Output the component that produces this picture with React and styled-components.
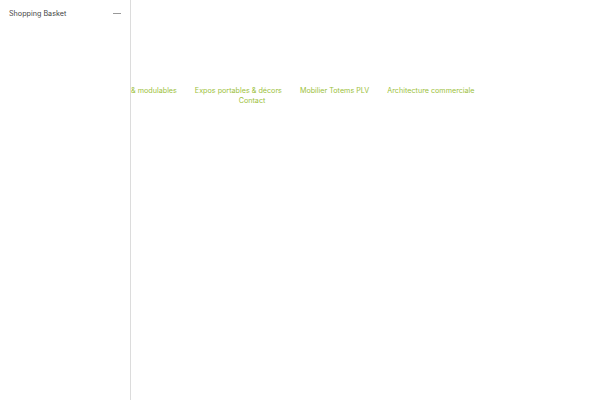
import React from 'react';
import styled, { createGlobalStyle } from 'styled-components';

const Global = createGlobalStyle`
  html, body { margin: 0; padding: 0; background: #fff; }
  body { font-family: "Inter", "Open Sans", sans-serif; }
`;

const Page = styled.div`
  width: 600px;
  height: 400px;
  position: relative;
  overflow: hidden;
`;

const Header = styled.header`
  padding: 86px 0 0 7px;
  width: 490px;
`;

const Menu = styled.ul`
  list-style: none;
  margin: 0;
  padding: 0;
  text-align: center;
  font-size: 7.2px;
  line-height: 10px;
`;

const MenuItem = styled.li`
  display: inline-block;
  white-space: nowrap;
  margin: 0 9px;
  color: #9cbf3c;
`;

const Basket = styled.aside`
  position: absolute;
  top: 0;
  left: 0;
  bottom: 0;
  width: 131px;
  background: #fff;
  border-right: 1px solid #dcdcdc;
  box-sizing: border-box;
`;

const BasketHead = styled.div`
  display: flex;
  align-items: center;
  justify-content: space-between;
  padding: 8px 9px 0 9px;
  height: 11px;
  font-size: 7.2px;
  color: #444;
`;

const Minus = styled.span`
  display: block;
  width: 8px;
  height: 1px;
  background: #999;
`;

export default function App() {
  const items = [
    'Stands parapluies, dépliables & modulables',
    'Expos portables & décors',
    'Mobilier Totems PLV',
    'Architecture commerciale',
    'Contact',
  ];
  return (
    <Page>
      <Global />
      <Header>
        <Menu>
          {items.map(t => (
            <MenuItem key={t}>{t}</MenuItem>
          ))}
        </Menu>
      </Header>
      <Basket>
        <BasketHead>
          <span>Shopping Basket</span>
          <Minus />
        </BasketHead>
      </Basket>
    </Page>
  );
}
